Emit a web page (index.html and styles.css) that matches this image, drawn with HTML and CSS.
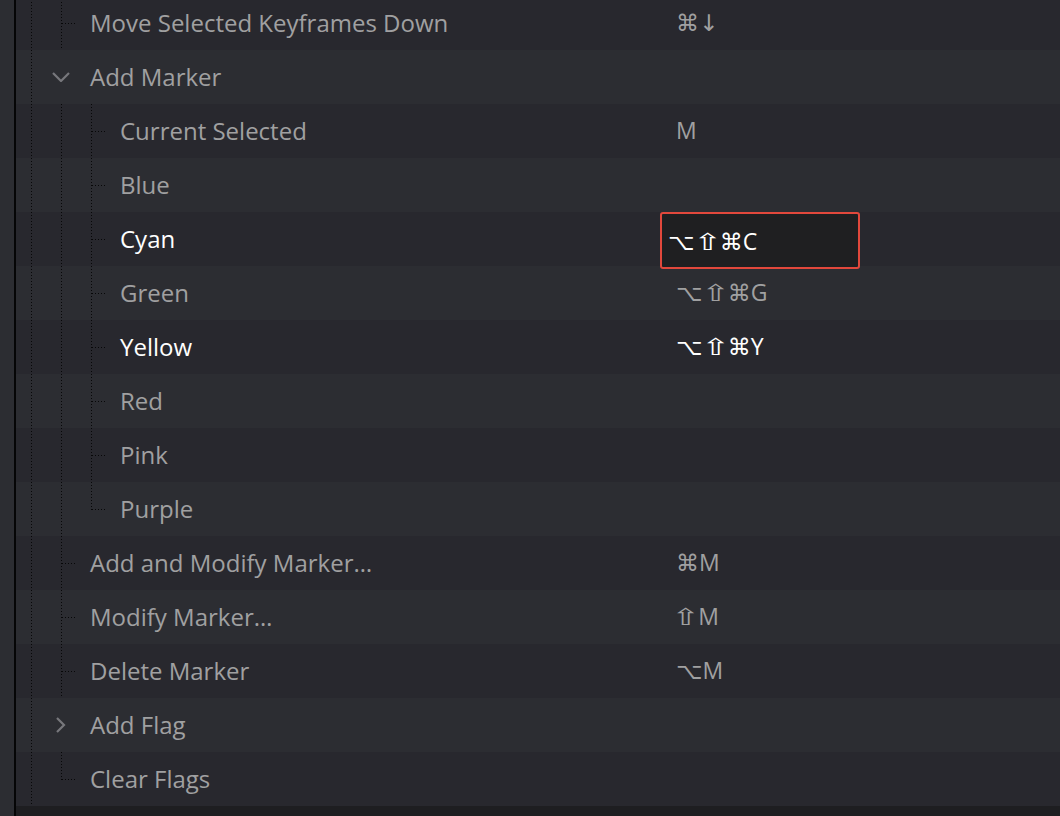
FILE: index.html
```html
<!DOCTYPE html>
<html>
<head>
<meta charset="utf-8">
<link rel="stylesheet" href="styles.css">
</head>
<body>
<div class="frame">
  <div class="strip"></div>
  <div class="edge"></div>
  <div class="list">
    <div class="row dark">
      <div class="main">
        <div class="cell"><span class="vl"></span></div>
        <div class="cell"><span class="vl"></span><span class="hl"></span></div>
        <span class="label">Move Selected Keyframes Down</span>
      </div>
      <span class="key">⌘↓</span>
    </div>
    <div class="row light">
      <div class="main">
        <div class="cell"><span class="vl"></span></div>
        <div class="cell chev"><svg width="18" height="10" viewBox="0 0 18 10"><path d="M1 1 L9 9 L17 1" fill="none" stroke="#77777c" stroke-width="2.2"/></svg></div>
        <span class="label">Add Marker</span>
      </div>
      <span class="key"></span>
    </div>
    <div class="row dark">
      <div class="main">
        <div class="cell"><span class="vl"></span></div>
        <div class="cell"><span class="vl"></span></div>
        <div class="cell"><span class="vl"></span><span class="hl"></span></div>
        <span class="label">Current Selected</span>
      </div>
      <span class="key">M</span>
    </div>
    <div class="row light">
      <div class="main">
        <div class="cell"><span class="vl"></span></div>
        <div class="cell"><span class="vl"></span></div>
        <div class="cell"><span class="vl"></span><span class="hl"></span></div>
        <span class="label">Blue</span>
      </div>
      <span class="key"></span>
    </div>
    <div class="row dark">
      <div class="main">
        <div class="cell"><span class="vl"></span></div>
        <div class="cell"><span class="vl"></span></div>
        <div class="cell"><span class="vl"></span><span class="hl"></span></div>
        <span class="label on">Cyan</span>
      </div>
      <span class="key editing">⌥<span class="sh">⇧</span>⌘C</span>
    </div>
    <div class="row light">
      <div class="main">
        <div class="cell"><span class="vl"></span></div>
        <div class="cell"><span class="vl"></span></div>
        <div class="cell"><span class="vl"></span><span class="hl"></span></div>
        <span class="label">Green</span>
      </div>
      <span class="key">⌥<span class="sh">⇧</span>⌘G</span>
    </div>
    <div class="row dark">
      <div class="main">
        <div class="cell"><span class="vl"></span></div>
        <div class="cell"><span class="vl"></span></div>
        <div class="cell"><span class="vl"></span><span class="hl"></span></div>
        <span class="label on">Yellow</span>
      </div>
      <span class="key on">⌥<span class="sh">⇧</span>⌘Y</span>
    </div>
    <div class="row light">
      <div class="main">
        <div class="cell"><span class="vl"></span></div>
        <div class="cell"><span class="vl"></span></div>
        <div class="cell"><span class="vl"></span><span class="hl"></span></div>
        <span class="label">Red</span>
      </div>
      <span class="key"></span>
    </div>
    <div class="row dark">
      <div class="main">
        <div class="cell"><span class="vl"></span></div>
        <div class="cell"><span class="vl"></span></div>
        <div class="cell"><span class="vl"></span><span class="hl"></span></div>
        <span class="label">Pink</span>
      </div>
      <span class="key"></span>
    </div>
    <div class="row light">
      <div class="main">
        <div class="cell"><span class="vl"></span></div>
        <div class="cell"><span class="vl"></span></div>
        <div class="cell"><span class="vl half"></span><span class="hl"></span></div>
        <span class="label">Purple</span>
      </div>
      <span class="key"></span>
    </div>
    <div class="row dark">
      <div class="main">
        <div class="cell"><span class="vl"></span></div>
        <div class="cell"><span class="vl"></span><span class="hl"></span></div>
        <span class="label">Add and Modify Marker…</span>
      </div>
      <span class="key">⌘M</span>
    </div>
    <div class="row light">
      <div class="main">
        <div class="cell"><span class="vl"></span></div>
        <div class="cell"><span class="vl"></span><span class="hl"></span></div>
        <span class="label">Modify Marker…</span>
      </div>
      <span class="key"><span class="sh first">⇧</span>M</span>
    </div>
    <div class="row dark">
      <div class="main">
        <div class="cell"><span class="vl"></span></div>
        <div class="cell"><span class="vl"></span><span class="hl"></span></div>
        <span class="label">Delete Marker</span>
      </div>
      <span class="key">⌥M</span>
    </div>
    <div class="row light">
      <div class="main">
        <div class="cell"><span class="vl"></span></div>
        <div class="cell chev"><svg width="10" height="16" viewBox="0 0 10 16"><path d="M1 1 L8 8 L1 15" fill="none" stroke="#77777c" stroke-width="2.2"/></svg></div>
        <span class="label">Add Flag</span>
      </div>
      <span class="key"></span>
    </div>
    <div class="row dark">
      <div class="main">
        <div class="cell"><span class="vl"></span></div>
        <div class="cell"><span class="vl half"></span><span class="hl"></span></div>
        <span class="label">Clear Flags</span>
      </div>
      <span class="key"></span>
    </div>
  </div>
</div>
</body>
</html>
```

FILE: styles.css
```css
html, body {
  margin: 0;
  padding: 0;
  background: #1e1e21;
  width: 1060px;
  height: 816px;
  overflow: hidden;
}

.frame {
  display: flex;
  height: 816px;
  background: #1e1e21;
}

.strip {
  width: 14px;
  flex: none;
  background: #2c2d32;
}

.edge {
  width: 2px;
  flex: none;
  background: #050506;
}

.list {
  flex: 1;
  margin-top: -4px;
  display: flex;
  flex-direction: column;
  align-self: flex-start;
}

.row {
  height: 54px;
  display: flex;
  align-items: center;
  font-family: "Open Sans", "DejaVu Sans", sans-serif;
  font-size: 24px;
  color: #a0a0a1;
}

.row.dark { background: #28282e; }
.row.light { background: #2c2d32; }

.main {
  width: 660px;
  flex: none;
  height: 54px;
  display: flex;
  align-items: center;
}

.cell {
  width: 30px;
  height: 54px;
  flex: none;
  display: grid;
  grid-template-columns: 15px 1px 14px;
  grid-template-rows: 27px 1px 26px;
}

.cell.chev {
  display: flex;
  align-items: center;
  justify-content: center;
}

.vl {
  grid-column: 2;
  grid-row: 1 / 4;
  background-image: linear-gradient(to bottom, #070708 1px, transparent 1px);
  background-size: 1px 3px;
}

.vl.half {
  grid-row: 1 / 3;
}

.hl {
  grid-column: 3;
  grid-row: 2;
  background-image: linear-gradient(to right, #070708 1px, transparent 1px);
  background-size: 3px 1px;
}

.label {
  white-space: nowrap;
  margin-left: 14px;
  margin-bottom: 2px;
}

.on { color: #ffffff; }

.key {
  font-family: "Open Sans", "DejaVu Sans", sans-serif;
  font-size: 23px;
  white-space: nowrap;
  margin-bottom: 2px;
}

.sh {
  display: inline-block;
  transform: scaleX(1.5);
  margin: 0 3px 0 3px;
}

.sh.first {
  margin-left: 0;
}

.key.editing {
  position: relative;
  align-self: flex-start;
  margin-left: -16px;
  margin-bottom: 0;
  width: 200px;
  height: 57px;
  box-sizing: border-box;
  border: 2px solid #e2483c;
  border-radius: 3px;
  background: #1f1f21;
  color: #ffffff;
  padding-left: 6px;
  display: flex;
  align-items: center;
}
```
